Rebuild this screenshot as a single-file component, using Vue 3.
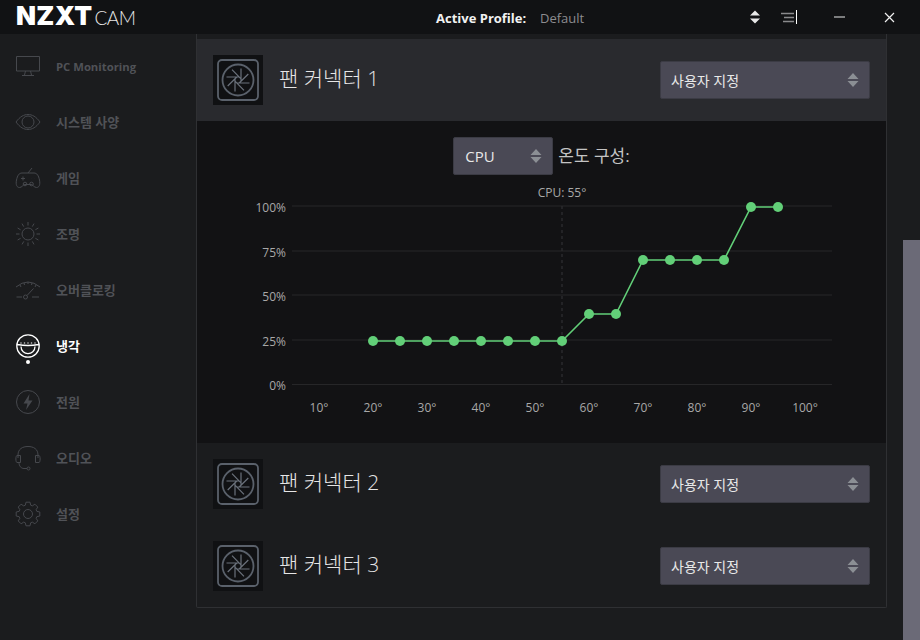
<script setup>
const rays = (cx, cy, r1, r2, n) => {
  let d = ''
  for (let i = 0; i < n; i++) {
    const a = (i * 2 * Math.PI) / n
    d += `M${(cx + r1 * Math.cos(a)).toFixed(1)} ${(cy + r1 * Math.sin(a)).toFixed(1)}L${(cx + r2 * Math.cos(a)).toFixed(1)} ${(cy + r2 * Math.sin(a)).toFixed(1)}`
  }
  return d
}
const circle = (cx, cy, r) => `M${cx - r} ${cy}a${r} ${r} 0 1 0 ${2 * r} 0a${r} ${r} 0 1 0 ${-2 * r} 0`

const gear = (() => {
  let d = ''
  const n = 8
  for (let i = 0; i < n; i++) {
    const step = (2 * Math.PI) / n
    const a = i * step - Math.PI / 2
    const pts = [[-0.3, 9.2], [-0.17, 12], [0.17, 12], [0.3, 9.2]]
    pts.forEach(([o, r], j) => {
      const x = 14 + r * Math.cos(a + o)
      const y = 18 + r * Math.sin(a + o)
      d += `${i === 0 && j === 0 ? 'M' : 'L'}${x.toFixed(1)} ${y.toFixed(1)}`
    })
  }
  return d + 'Z' + circle(14, 18, 4.5)
})()

const navItems = [
  { label: 'PC Monitoring', latin: true, d: 'M2.5 8.5H25.5V23H2.5ZM11.5 23L10.5 27M16.5 23L17.5 27M8 27.5H20' },
  { label: '시스템 사양', d: 'M2 18C6 12.5 10 10.5 14 10.5C18 10.5 22 12.5 26 18C22 23.5 18 25.5 14 25.5C10 25.5 6 23.5 2 18Z' + circle(14, 18, 6) },
  { label: '게임', d: 'M8 13C5 13 3.5 15.5 2.5 20C1.5 25 3 27.5 5.5 27.5C8 27.5 9 24.5 11 24.5H17C19 24.5 20 27.5 22.5 27.5C25 27.5 26.5 25 25.5 20C24.5 15.5 23 13 20 13ZM14 13L18 8M7 18.5H11M9 16.5V20.5M19 17V17.1M19 20V20.1M17.5 18.5H17.6M20.5 18.5H20.6' + circle(11, 24, 1.8) + circle(17.5, 24, 1.8) },
  { label: '조명', d: circle(14, 18, 6) + rays(14, 18, 8.5, 12, 12) },
  { label: '오버클로킹', d: 'M2 15Q14 5 26 15M6 13L7 15M10 11L10.5 13M14 10V12M18 11L17.5 13M22 13L21 15M13 23.5L19.5 16.5M2.5 25H8M18 25H25' + circle(11.5, 25, 2) },
  { label: '냉각', active: true, d: circle(14, 18, 11.2) + 'M3.5 16.5Q14 18.5 24.5 16.5M7 18.5C7 28 21 28 21 18.5M7 14.5V15.5M10.5 14.5V15.5M14 14.5V15.5M17.5 14.5V15.5M21 14.5V15.5' },
  { label: '전원', d: circle(14, 18, 11.5), fill: 'M15.5 10L9.5 19.5H13.5L12 26L18.5 16.5H14.5Z' },
  { label: '오디오', d: 'M4 18V15C4 9 8.5 6.5 14 6.5C19.5 6.5 24 9 24 15V18M3 15.5H6.5V22.5H3C1.5 22.5 1.5 15.5 3 15.5ZM25 15.5H21.5V22.5H25C26.5 22.5 26.5 15.5 25 15.5ZM5 22.5C5 26 7 28.5 10 28.5H13' + circle(14.5, 28.5, 1.5) },
  { label: '설정', d: gear },
]

const aperture = (() => {
  let d = ''
  for (let i = 0; i < 8; i++) {
    const a = -Math.PI / 2 + (i * Math.PI) / 4
    const b = a - Math.PI / 2
    const fx = 20 + 3 * Math.cos(a)
    const fy = 20 + 3 * Math.sin(a)
    const sx = fx - 1.3 * Math.cos(b)
    const sy = fy - 1.3 * Math.sin(b)
    const ex = fx + 11.5 * Math.cos(b)
    const ey = fy + 11.5 * Math.sin(b)
    d += `M${sx.toFixed(1)} ${sy.toFixed(1)}L${ex.toFixed(1)} ${ey.toFixed(1)}`
  }
  return d
})()

const hLines = [
  { y: 25, label: '100%' },
  { y: 70, label: '75%' },
  { y: 114, label: '50%' },
  { y: 159, label: '25%' },
  { y: 203.5, label: '0%' },
]
const xLabels = [10, 20, 30, 40, 50, 60, 70, 80, 90, 100].map((t) => ({
  x: 122 + ((t - 10) / 5) * 27,
  label: `${t}°`,
}))
const level = { 25: 160, 40: 133, 70: 79, 100: 26 }
const speeds = [25, 25, 25, 25, 25, 25, 25, 25, 40, 40, 70, 70, 70, 70, 100, 100]
const points = speeds.map((s, i) => ({ x: 176 + i * 27, y: level[s] }))
const polyline = points.map((p) => `${p.x},${p.y}`).join(' ')
</script>

<template>
  <div class="app">
    <header class="titlebar">
      <div class="logo"><span class="nzxt">NZXT</span><span class="cam">CAM</span></div>
      <div class="profile">
        <span class="profile-label">Active Profile:</span>
        <span class="profile-value">Default</span>
      </div>
      <div class="controls">
        <svg class="ctl-updown" width="12" height="14" viewBox="0 0 12 14">
          <path d="M6 0.5L11 5.5H1ZM6 13.5L1 8.5H11Z" fill="#e8e8e8" />
        </svg>
        <svg class="ctl-menu" width="18" height="14" viewBox="0 0 18 14">
          <path d="M1 3.5H14M4 7.5H14M3 11.5H14" stroke="#8a8a8c" stroke-width="1.6" />
          <path d="M16.5 0V14" stroke="#ffffff" stroke-width="1" />
        </svg>
        <svg class="ctl-min" width="11" height="2" viewBox="0 0 11 2">
          <path d="M0 1H11" stroke="#e8e8e8" stroke-width="1" />
        </svg>
        <svg class="ctl-close" width="11" height="11" viewBox="0 0 11 11">
          <path d="M1 1L10 10M10 1L1 10" stroke="#f0f0f0" stroke-width="1.2" />
        </svg>
      </div>
    </header>

    <div class="body">
      <nav class="sidebar">
        <div v-for="item in navItems" :key="item.label" class="nav-item" :class="{ active: item.active, latin: item.latin }">
          <svg class="nav-icon" width="28" height="36" viewBox="0 0 28 36">
            <path :d="item.d" fill="none" stroke="currentColor" :stroke-width="item.active ? 1.3 : 1" />
            <path v-if="item.fill" :d="item.fill" fill="currentColor" />
            <circle v-if="item.active" cx="14" cy="34" r="2" fill="currentColor" />
          </svg>
          <span>{{ item.label }}</span>
        </div>
      </nav>

      <main class="content">
        <section class="panel">
          <div class="row expanded">
            <div class="fan-box">
              <svg width="42" height="42" viewBox="-1 -1 42 42">
                <rect x="0" y="0" width="40" height="40" rx="4" fill="none" stroke="#5a616b" stroke-width="1.8" />
                <circle cx="20" cy="20" r="15.5" fill="none" stroke="#5a616b" stroke-width="1.8" />
                <path :d="aperture" fill="none" stroke="#6b727c" stroke-width="1.2" />
              </svg>
            </div>
            <span class="row-title">팬 커넥터 1</span>
            <div class="select wide">
              <span>사용자 지정</span>
              <svg width="12" height="16" viewBox="0 0 12 16"><path d="M6 1L11.5 7H0.5ZM6 15L0.5 9H11.5Z" fill="#8b8f94" /></svg>
            </div>
          </div>

          <div class="chart">
            <div class="chart-head">
              <div class="select small">
                <span>CPU</span>
                <svg width="12" height="16" viewBox="0 0 12 16"><path d="M6 1L11.5 7H0.5ZM6 15L0.5 9H11.5Z" fill="#8b8f94" /></svg>
              </div>
              <span class="chart-caption">온도 구성:</span>
            </div>
            <svg class="plot" width="688" height="256" viewBox="0 0 688 256">
              <text x="365" y="16" class="tick" text-anchor="middle">CPU: 55°</text>
              <line v-for="l in hLines" :key="l.label" x1="95" x2="635" :y1="l.y" :y2="l.y" stroke="#262628" stroke-width="1" />
              <line x1="365" x2="365" y1="25" y2="204" stroke="#2a2a2c" stroke-width="1.5" stroke-dasharray="3 3" />
              <text v-for="l in hLines" :key="'t' + l.label" x="89" :y="l.y + 5.5" class="tick" text-anchor="end">{{ l.label }}</text>
              <text v-for="l in xLabels" :key="l.label" :x="l.x" y="231" class="tick" text-anchor="middle">{{ l.label }}</text>
              <polyline :points="polyline" fill="none" stroke="#62cf78" stroke-width="1.6" />
              <circle v-for="p in points" :key="p.x" :cx="p.x" :cy="p.y" r="5" fill="#62cf78" />
            </svg>
          </div>

          <div v-for="n in [2, 3]" :key="n" class="row">
            <div class="fan-box">
              <svg width="42" height="42" viewBox="-1 -1 42 42">
                <rect x="0" y="0" width="40" height="40" rx="4" fill="none" stroke="#5a616b" stroke-width="1.8" />
                <circle cx="20" cy="20" r="15.5" fill="none" stroke="#5a616b" stroke-width="1.8" />
                <path :d="aperture" fill="none" stroke="#6b727c" stroke-width="1.2" />
              </svg>
            </div>
            <span class="row-title">팬 커넥터 {{ n }}</span>
            <div class="select wide">
              <span>사용자 지정</span>
              <svg width="12" height="16" viewBox="0 0 12 16"><path d="M6 1L11.5 7H0.5ZM6 15L0.5 9H11.5Z" fill="#8b8f94" /></svg>
            </div>
          </div>
        </section>
        <div class="scrolltrack"><div class="scrollthumb"></div></div>
      </main>
    </div>
  </div>
</template>

<style>
html, body { margin: 0; background: #1b1c1e; }
</style>

<style scoped>
.app {
  width: 920px;
  height: 640px;
  overflow: hidden;
  background: #1b1c1e;
  font-family: "Open Sans", "Noto Sans CJK KR", sans-serif;
  display: flex;
  flex-direction: column;
}
.titlebar {
  height: 34px;
  background: #111214;
  display: flex;
  align-items: center;
  flex: none;
  color: #fff;
}
.logo {
  width: 420px;
  padding-left: 16px;
  box-sizing: border-box;
  display: flex;
  align-items: baseline;
  height: 34px;
  line-height: 34px;
}
.nzxt {
  font-family: Inter, sans-serif;
  font-weight: 900;
  font-size: 26px;
  letter-spacing: 0.3px;
  color: #fff;
  transform: translateY(-1px);
}
.cam {
  font-family: Lato, sans-serif;
  font-weight: 300;
  font-size: 19px;
  letter-spacing: -0.6px;
  color: #e8e8e8;
  margin-left: 2px;
  transform: translateY(-1px);
}
.profile {
  display: flex;
  align-items: center;
  width: 308px;
  padding-left: 16px;
  box-sizing: border-box;
  font-size: 13px;
  transform: translateY(1px);
}
.profile-label { font-weight: 700; color: #f2f2f2; width: 104px; }
.profile-value { color: #8c8c90; }
.controls { position: relative; flex: 1; height: 34px; display: flex; align-items: center; }
.ctl-updown { margin-left: 21px; }
.ctl-menu { margin-left: 19px; }
.ctl-min { margin-left: 36px; }
.ctl-close { margin-left: 39px; }
.body { flex: 1; display: flex; min-height: 0; }
.sidebar {
  width: 196px;
  flex: none;
  padding-top: 4px;
  box-sizing: border-box;
}
.nav-item {
  height: 56px;
  display: flex;
  align-items: center;
  padding-left: 14px;
  color: #46484d;
  font-size: 13px;
  font-weight: 700;
}
.nav-item span { margin-left: 14px; color: #505257; transform: translateY(-1px); }
.nav-item.latin { font-size: 11.3px; }
.nav-item.latin span { transform: none; }
.nav-item.active, .nav-item.active span { color: #fff; }
.nav-icon { flex: none; }
.content { flex: 1; display: flex; min-width: 0; align-items: flex-start; }
.panel {
  width: 691px;
  flex: none;
  box-sizing: border-box;
  margin-top: 0;
  padding-top: 5px;
  border-left: 1px solid #2f3033;
  border-right: 1px solid #2f3033;
  border-bottom: 1px solid #2f3033;
  border-bottom-left-radius: 2px;
  border-bottom-right-radius: 2px;
}
.row {
  height: 82px;
  box-sizing: border-box;
  display: flex;
  align-items: center;
  padding: 0 16px;
}
.row.expanded { background: #292a2e; }
.fan-box {
  width: 50px;
  height: 50px;
  background: #101113;
  display: flex;
  align-items: center;
  justify-content: center;
  flex: none;
}
.row-title {
  margin-left: 16px;
  flex: 1;
  color: #e6e6e6;
  font-size: 21px;
  font-weight: 300;
  transform: translateY(-3px);
}
.select {
  box-sizing: border-box;
  height: 38px;
  background: #4a4955;
  border: 1px solid #3b3b44;
  border-radius: 2px;
  color: #e8e8e8;
  display: flex;
  align-items: center;
  justify-content: space-between;
  flex: none;
}
.wide { width: 210px; padding: 0 10px; font-size: 14px; }
.small { width: 100px; padding: 0 10px 0 11px; font-size: 15px; }
.chart { background: #121214; height: 322px; box-sizing: border-box; padding-top: 16px; }
.chart-head {
  display: flex;
  align-items: center;
  justify-content: center;
  gap: 5px;
  height: 38px;
}
.chart-caption { color: #c4c4c4; font-size: 17px; transform: translateY(-2px); }
.plot { display: block; margin-top: 6px; }
.tick { font-family: "Open Sans", sans-serif; font-size: 12px; fill: #a8a8a8; }
.scrolltrack {
  position: relative;
  flex: 1;
  align-self: stretch;
  display: flex;
  justify-content: flex-end;
}
.scrollthumb {
  width: 17px;
  height: 400px;
  margin-top: 206px;
  background: #6b6a77;
}
</style>
